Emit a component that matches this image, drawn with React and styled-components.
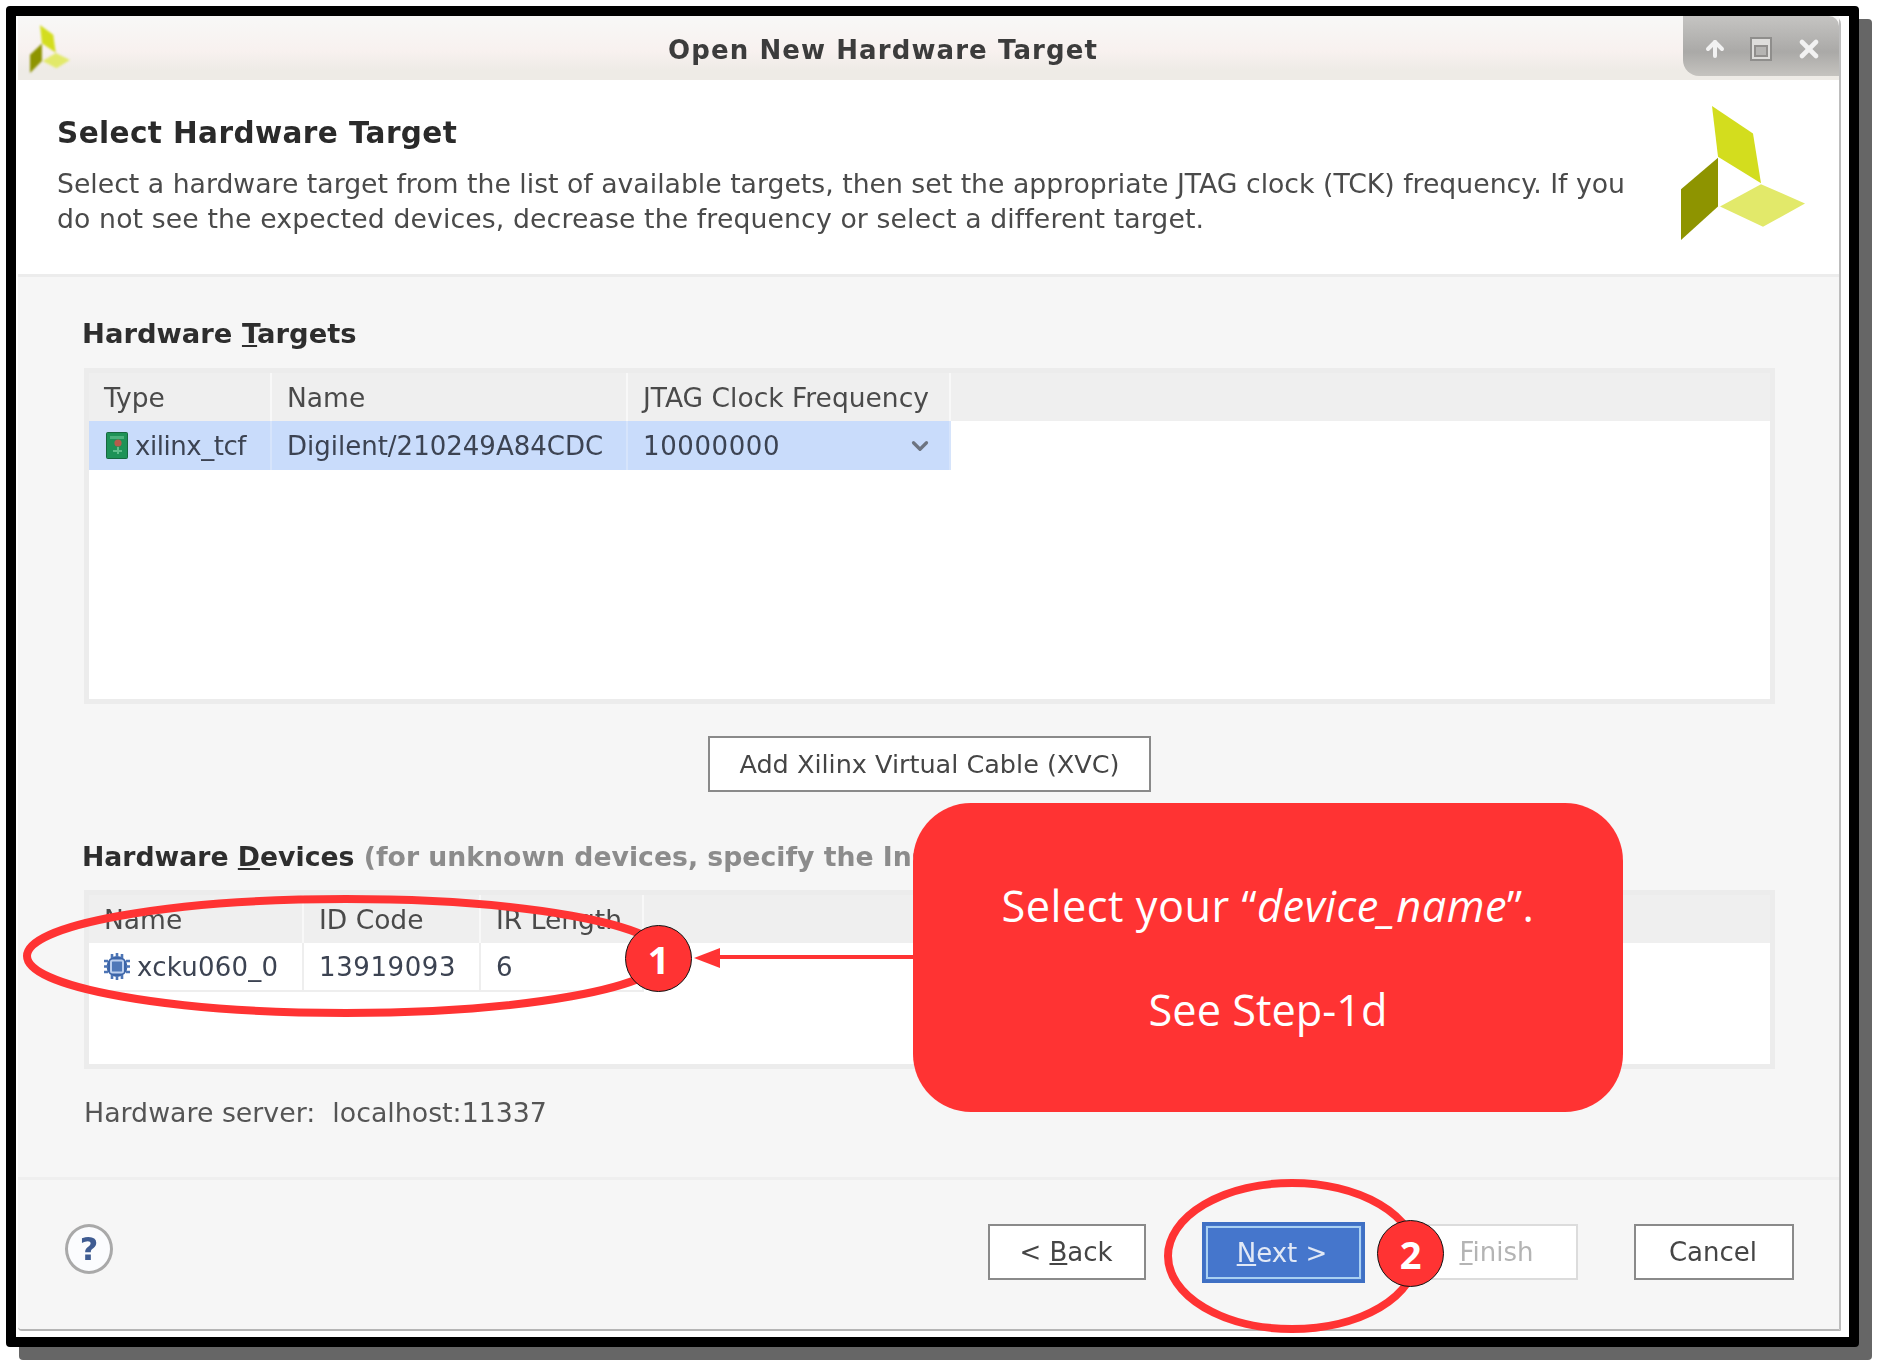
import React from "react";
import styled, { createGlobalStyle } from "styled-components";
import { ArrowUp, X, ChevronDown } from "lucide-react";

const Global = createGlobalStyle`
  html, body { margin: 0; padding: 0; background: #fff; }
  #root { width: 1880px; height: 1367px; position: relative; overflow: hidden; font-family: "DejaVu Sans", sans-serif; }
  * { box-sizing: border-box; }
`;

const Stage = styled.div`
  width: 1880px;
  height: 1367px;
  padding: 6px 0 0 6px;
  position: relative;
`;
const Frame = styled.div`
  width: 1853px;
  height: 1341px;
  border: 10px solid #000;
  border-radius: 4px;
  background: #fff;
  box-shadow: 13px 13px 0 #666;
  padding: 0 8px 6px 2px;
`;
const Dialog = styled.div`
  height: 100%;
  display: flex;
  flex-direction: column;
  background: #f6f6f6;
  border-right: 2px solid #bdbdbd;
  border-bottom: 2px solid #b5b5b5;
  border-radius: 0 8px 0 4px;
  filter: blur(0.7px);
  color: #444;
`;
const TitleBar = styled.div`
  height: 64px;
  flex: none;
  display: flex;
  align-items: center;
  justify-content: center;
  position: relative;
  background: linear-gradient(#f8f8f7, #f8f1ef 55%, #eeebe6 85%);
`;
const TitleText = styled.div`
  font-size: 26px;
  font-weight: 700;
  letter-spacing: 1.1px;
  color: #3c3c3c;
  margin: 4px 91px 0 0;
`;
const SmallLogo = styled.svg`
  position: absolute;
  left: 12px;
  top: 9px;
  width: 40px;
  height: 48px;
  filter: blur(1.2px);
`;
const WinButtons = styled.div`
  position: absolute;
  right: 0;
  top: 0;
  width: 156px;
  height: 60px;
  display: flex;
  align-items: center;
  justify-content: space-between;
  padding: 6px 16px 0 20px;
  color: #f2f2f2;
  background: linear-gradient(#c5c4c2, #aaa9a7 60%, #c5c3bf);
  border-radius: 0 10px 0 16px;
`;
const MaxIcon = styled.span`
  width: 22px;
  height: 24px;
  border: 2px solid #8f8e8c;
  background: #dedddb;
  padding: 6px 2px 2px;
  display: flex;
  &::after {
    content: "";
    flex: 1;
    background: #b5b4b2;
    border: 2px solid #918f8d;
  }
`;
const Header = styled.div`
  height: 197px;
  flex: none;
  background: #fff;
  border-bottom: 3px solid #ececec;
  padding: 35px 0 0 39px;
  display: flex;
  position: relative;
`;
const HeaderText = styled.div`
  width: 1600px;
`;
const Headline = styled.h1`
  margin: 0 0 16px;
  font-size: 29.5px;
  line-height: 36px;
  font-weight: 700;
  letter-spacing: 0.4px;
  color: #2a2a2a;
`;
const Description = styled.p`
  margin: 0;
  font-size: 26.7px;
  line-height: 34.5px;
  color: #4a4a4a;
  white-space: nowrap;
`;
const LooseLine = styled.span`
  letter-spacing: 0.12px;
`;
const BigLogo = styled.svg`
  position: absolute;
  left: 1663px;
  top: 26px;
  width: 124px;
  height: 134px;
`;
const Body = styled.div`
  flex: none;
  height: 900px;
  padding: 40px 64px 0 66px;
  display: flex;
  flex-direction: column;
`;
const SectionLabel = styled.div`
  font-size: ${(p) => p.$size}px;
  line-height: 34px;
  font-weight: 700;
  color: #2e2e2e;
  white-space: nowrap;
  margin-bottom: ${(p) => p.$gap}px;
  margin-left: -2px;
`;
const Muted = styled.span`
  color: #8c8c8c;
`;
const TableBox = styled.div`
  height: ${(p) => p.$height}px;
  flex: none;
  border: 5px solid #ececec;
  background: #fff;
`;
const HeadRow = styled.div`
  height: 48px;
  display: flex;
  background: #efefef;
`;
const HeadCell = styled.div`
  width: ${(p) => p.$w}px;
  padding-left: ${(p) => p.$pad}px;
  display: flex;
  align-items: center;
  font-size: 26.5px;
  color: #4a4a4a;
  border-right: 2px solid #f8f8f8;
  white-space: nowrap;
`;
const Row = styled.div`
  height: 49px;
  display: flex;
  width: fit-content;
  background: ${(p) => (p.$selected ? "#c9dcfb" : "#fff")};
  border-bottom: ${(p) => (p.$selected ? "none" : "2px solid #eee")};
`;
const Cell = styled.div`
  width: ${(p) => p.$w}px;
  padding-left: ${(p) => p.$pad}px;
  padding-right: 12px;
  display: flex;
  align-items: center;
  gap: ${(p) => p.$gap || 7}px;
  font-size: 26px;
  color: #3c4352;
  border-right: 2px solid ${(p) => (p.$selected ? "#d6e4fb" : "#eee")};
  white-space: nowrap;
  position: relative;
`;
const Numeric = styled.span`
  letter-spacing: 0.6px;
`;
const Tight = styled.span`
  letter-spacing: -0.45px;
`;
const Loose = styled.span`
  letter-spacing: 0.25px;
`;
const Chevron = styled.span`
  position: absolute;
  right: 16px;
  top: 12px;
  display: flex;
  color: #6d7480;
`;
const CenterRow = styled.div`
  display: flex;
  justify-content: center;
  margin-top: 32px;
  margin-bottom: 48px;
`;
const PlainButton = styled.button`
  width: ${(p) => p.$w || 160}px;
  height: 56px;
  flex: none;
  margin-left: ${(p) => p.$ml || 0}px;
  background: #fff;
  border: 2px solid ${(p) => (p.$disabled ? "#dcdcdc" : "#8a8a8a")};
  font-family: inherit;
  font-size: ${(p) => p.$size || 26}px;
  color: ${(p) => (p.$disabled ? "#b4b4b4" : "#454545")};
  padding: 0 ${(p) => p.$shift || 0}px 0 0;
`;
const PrimaryButton = styled.button`
  width: 163px;
  height: 61px;
  flex: none;
  margin: -2px 53px 0 56px;
  background: #4576cc;
  border: 3px solid #3f70c4;
  outline: 2px solid #a9d0f2;
  outline-offset: -6px;
  font-family: inherit;
  font-size: 26px;
  color: #e2e9f6;
  padding: 0 3px 0 0;
`;
const ServerLine = styled.div`
  margin-top: 27px;
  font-size: 26.8px;
  line-height: 34px;
  color: #555;
  white-space: pre;
`;
const Footer = styled.div`
  flex: 1;
  border-top: 3px solid #efefef;
  padding: 44px 45px 0 47px;
  display: flex;
  align-items: flex-start;
`;
const HelpIcon = styled.div`
  width: 48px;
  height: 50px;
  border-radius: 50%;
  border: 3px solid #a9a9a9;
  background: #fbfcfe;
  color: #3f5c92;
  font-size: 32px;
  font-weight: 700;
  display: flex;
  align-items: center;
  justify-content: center;
`;
const Spacer = styled.div`
  flex: 1;
`;
const Annotations = styled.svg`
  position: absolute;
  left: 0;
  top: 0;
  width: 1880px;
  height: 1367px;
  pointer-events: none;
`;
const Callout = styled.div`
  position: absolute;
  left: 913px;
  top: 803px;
  width: 710px;
  height: 309px;
  border-radius: 58px;
  background: #ff3333;
  color: #fff;
  font-family: "Open Sans", sans-serif;
  font-size: 43.3px;
  display: flex;
  flex-direction: column;
  align-items: center;
  justify-content: center;
  gap: 46px;
  line-height: 58px;
`;
const CalloutLead = styled.div`
  letter-spacing: 0.5px;
  margin-top: 1px;
`;
const Badge = styled.div`
  position: absolute;
  left: ${(p) => p.$x}px;
  top: ${(p) => p.$y}px;
  width: 67px;
  height: 67px;
  border-radius: 50%;
  background: #ff3333;
  border: 1.5px solid #111;
  color: #fff;
  font-family: "Open Sans", sans-serif;
  font-weight: 700;
  font-size: 38px;
  display: flex;
  align-items: center;
  justify-content: center;
`;

const Logo = ({ as: Comp }) => (
  <Comp viewBox="0 0 124 132" preserveAspectRatio="none">
    <polygon points="31,0 72,27 80,76 37,50" fill="#d3dd1e" />
    <polygon points="37,51 37,99 0,132 0,82" fill="#8e9400" />
    <polygon points="80,77 124,96 82,119 39,99" fill="#e2e96a" />
  </Comp>
);

const BoardIcon = () => (
  <svg width="22" height="27" viewBox="0 0 22 27">
    <rect x="0.5" y="0.5" width="21" height="26" rx="1" fill="#1e9257" stroke="#17683f" />
    <rect x="4" y="4" width="14" height="3" fill="#4bb07c" />
    <circle cx="12" cy="11" r="3.6" fill="#b65c4c" />
    <path d="M12 15v7M7 19h9" stroke="#5fbd8a" strokeWidth="2" fill="none" />
  </svg>
);

const ChipIcon = () => (
  <svg width="26" height="27" viewBox="0 0 26 27">
    <circle cx="13" cy="13.5" r="10.5" fill="#3c65a8" />
    <g stroke="#4d75b5" strokeWidth="2.6">
      <path d="M8 1v4M13 0v4M18 1v4M8 22v4M13 23v4M18 22v4M0 8h4M0 13.5h4M0 19h4M22 8h4M22 13.5h4M22 19h4" />
    </g>
    <rect x="7" y="7.5" width="12" height="12" rx="1.5" fill="#4f78b8" stroke="#bcd0ef" strokeWidth="2" />
  </svg>
);

export default function App() {
  return (
    <Stage>
      <Global />
      <Frame>
        <Dialog>
          <TitleBar>
            <Logo as={SmallLogo} />
            <TitleText>Open New Hardware Target</TitleText>
            <WinButtons>
              <ArrowUp size={24} strokeWidth={4} />
              <MaxIcon />
              <X size={28} strokeWidth={4} />
            </WinButtons>
          </TitleBar>
          <Header>
            <HeaderText>
              <Headline>Select Hardware Target</Headline>
              <Description>
                Select a hardware target from the list of available targets, then set the appropriate JTAG clock (TCK) frequency. If you
                <br />
                <LooseLine>do not see the expected devices, decrease the frequency or select a different target.</LooseLine>
              </Description>
            </HeaderText>
            <Logo as={BigLogo} />
          </Header>
          <Body>
            <SectionLabel $gap={17} $size={27.4}>
              Hardware <u>T</u>argets
            </SectionLabel>
            <TableBox $height={336}>
              <HeadRow>
                <HeadCell $w={183} $pad={15}>Type</HeadCell>
                <HeadCell $w={356} $pad={15}>Name</HeadCell>
                <HeadCell $w={323} $pad={15}>JTAG Clock Frequency</HeadCell>
              </HeadRow>
              <Row $selected>
                <Cell $w={183} $pad={17} $gap={7} $selected><BoardIcon /><Tight>xilinx_tcf</Tight></Cell>
                <Cell $w={356} $pad={15} $selected>Digilent/210249A84CDC</Cell>
                <Cell $w={323} $pad={15} $selected>
                  <Numeric>10000000</Numeric>
                  <Chevron><ChevronDown size={26} strokeWidth={3} /></Chevron>
                </Cell>
              </Row>
            </TableBox>
            <CenterRow>
              <PlainButton $w={443} $size={25.5}>Add Xilinx Virtual Cable (XVC)</PlainButton>
            </CenterRow>
            <SectionLabel $gap={16} $size={26.7}>
              Hardware <u>D</u>evices <Muted>(for unknown devices, specify the Instruction Register (IR) length)</Muted>
            </SectionLabel>
            <TableBox $height={179}>
              <HeadRow>
                <HeadCell $w={215} $pad={15}>Name</HeadCell>
                <HeadCell $w={177} $pad={15}>ID Code</HeadCell>
                <HeadCell $w={163} $pad={15}>IR Length</HeadCell>
              </HeadRow>
              <Row>
                <Cell $w={215} $pad={15}><ChipIcon /><Loose>xcku060_0</Loose></Cell>
                <Cell $w={177} $pad={15}><Numeric>13919093</Numeric></Cell>
                <Cell $w={163} $pad={15}>6</Cell>
              </Row>
            </TableBox>
            <ServerLine>Hardware server:  localhost:11337</ServerLine>
          </Body>
          <Footer>
            <HelpIcon>?</HelpIcon>
            <Spacer />
            <PlainButton $w={158} $shift={2}>&lt; <u>B</u>ack</PlainButton>
            <PrimaryButton><u>N</u>ext &gt;</PrimaryButton>
            <PlainButton $w={160} $shift={3} $disabled><u>F</u>inish</PlainButton>
            <PlainButton $w={160} $ml={56} $shift={2}>Cancel</PlainButton>
          </Footer>
        </Dialog>
      </Frame>
      <Annotations viewBox="0 0 1880 1367">
        <ellipse cx="346" cy="956" rx="319" ry="57" fill="none" stroke="#ff3333" strokeWidth="8" />
        <ellipse cx="1292" cy="1256" rx="124" ry="73" fill="none" stroke="#ff3333" strokeWidth="8" />
        <path d="M913 957H715" stroke="#ff3333" strokeWidth="4" fill="none" />
        <polygon points="694,958 720,948 720,968" fill="#ff3333" />
      </Annotations>
      <Callout>
        <CalloutLead>Select your “<i>device_name</i>”.</CalloutLead>
        <div>See Step-1d</div>
      </Callout>
      <Badge $x={625} $y={925}>1</Badge>
      <Badge $x={1377} $y={1220}>2</Badge>
    </Stage>
  );
}
